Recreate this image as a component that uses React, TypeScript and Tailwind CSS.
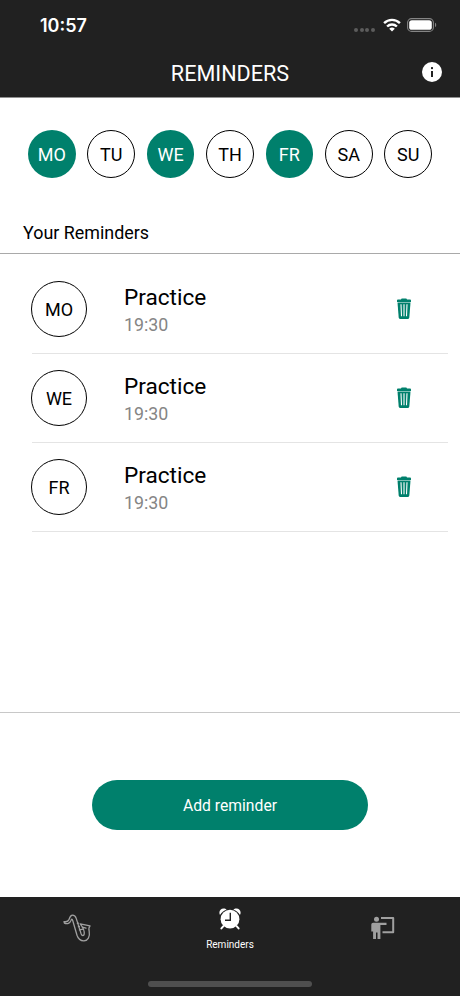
import React from "react";

type Reminder = { day: string; title: string; time: string };

const days = [
  { label: "MO", active: true },
  { label: "TU", active: false },
  { label: "WE", active: true },
  { label: "TH", active: false },
  { label: "FR", active: true },
  { label: "SA", active: false },
  { label: "SU", active: false },
];

const reminders: Reminder[] = [
  { day: "MO", title: "Practice", time: "19:30" },
  { day: "WE", title: "Practice", time: "19:30" },
  { day: "FR", title: "Practice", time: "19:30" },
];

const WifiIcon = () => (
  <svg width="18" height="14" viewBox="0 0 18 14" fill="none" stroke="#fff" strokeWidth="2.4">
    <path d="M1.1 5.1a11.2 11.2 0 0 1 15.8 0" />
    <path d="M4.1 8.5a7 7 0 0 1 9.8 0" />
    <path d="M9 13.6 6.2 10.8a4 4 0 0 1 5.6 0z" fill="#fff" stroke="none" />
  </svg>
);

const BatteryIcon = () => (
  <svg width="30" height="14" viewBox="0 0 30 14">
    <rect x="0.6" y="0.6" width="25.8" height="12.8" rx="4" fill="none" stroke="#858585" strokeWidth="1.1" />
    <rect x="2.2" y="2.2" width="22.6" height="9.6" rx="2.6" fill="#fff" />
    <path d="M28 4.8c1.6.6 1.6 3.8 0 4.4z" fill="#858585" />
  </svg>
);

const InfoIcon = () => (
  <svg width="20" height="20" viewBox="0 0 20 20">
    <circle cx="10" cy="10" r="10" fill="#fff" />
    <rect x="9" y="5.1" width="2" height="2" fill="#212121" />
    <rect x="9" y="9" width="2" height="6" fill="#212121" />
  </svg>
);

const TrashIcon = () => (
  <svg width="16" height="22" viewBox="0 0 16 22">
    <path
      d="M5 1.6C5 .8 5.6.4 6.4.4h3.2c.8 0 1.4.4 1.4 1.2h3.1c.6 0 .9.4.9.9v1.6H1V2.5c0-.5.3-.9.9-.9z"
      fill="#00806c"
    />
    <path d="M1.5 4.6h13l-1.2 15c-.1.9-.6 1.3-1.3 1.3H4c-.7 0-1.2-.4-1.3-1.3z" fill="#00806c" />
    <path d="M5 6.2l.5 12.1M8 6.2v12.1M11 6.2l-.5 12.1" stroke="#fff" strokeWidth="1.1" />
  </svg>
);

const SaxophoneIcon = () => (
  <svg
    width="28"
    height="28"
    viewBox="0 0 28 28"
    fill="none"
    stroke="#a0a0a0"
    strokeWidth="1.3"
    strokeLinejoin="round"
    strokeLinecap="round"
  >
    <path d="M1 7.6c2.8.6 4.2-.2 5.1-2.4C7.1 2.3 7.7 1.2 9.5 1.2c2.1 0 3.1 1.2 3.7 3.2l5 15.6c.7 2 2.7 2 3 .2.4-2.6-1-6.6-4-10.4l9.8 2.1c-1.7 1.5-1.3 3.2-.8 5.6 1 5.3-1.4 9.2-5.2 9.3-3.9.1-5.9-2.2-7-5.6L9.8 6.8c-.7-2-1.3-2-1.8-.4C7 9.3 4.2 10.4 1.4 9.2z" />
    <path d="M14.4 9.4l1-.2M15.4 12.6l1-.2M19.4 13.2l3.6.9M16.4 15.8l3.8-.6" />
  </svg>
);

const AlarmIcon = () => (
  <svg width="22" height="22" viewBox="0 0 22 22">
    <circle cx="11" cy="11.2" r="9.4" fill="#fff" />
    <path
      d="M1 6.9C-.7 4 1.3.6 4.6.6c1.3 0 2.2.4 3 1.1C4.8 2.5 2.4 4.3 1 6.9zM21 6.9C22.7 4 20.7.6 17.4.6c-1.3 0-2.2.4-3 1.1 2.8.8 5.2 2.6 6.6 5.2z"
      fill="#fff"
    />
    <path d="M4.4 18.2l-2 2.2M17.6 18.2l2 2.2" stroke="#fff" strokeWidth="2" strokeLinecap="round" />
    <path d="M11.3 4.8v7.4H6" fill="none" stroke="#212121" strokeWidth="1.4" />
  </svg>
);

const TeacherIcon = () => (
  <svg width="24" height="24" viewBox="0 0 24 24" fill="#a0a0a0">
    <path d="M10 2h12.2v14.2H11.5" fill="none" stroke="#a0a0a0" strokeWidth="2" strokeLinejoin="round" />
    <circle cx="5.5" cy="3.3" r="2.5" />
    <path d="M2.2 6.8h13.3v2.2H9.4v14H6.5v-6.5H5V23H2.1v-7.6H.3V8.7c0-1.1.8-1.9 1.9-1.9z" />
  </svg>
);

const App = () => {
  return (
    <div className="flex h-[996px] w-[460px] flex-col overflow-hidden bg-white font-['Roboto',sans-serif] text-black">
      {/* Header with status bar */}
      <header className="h-[98px] shrink-0 border-b border-[#909090] bg-[#212121] text-white">
        <div className="flex h-[50px] items-center justify-between pr-[23px] pl-10">
          <span className="pt-px font-['Inter',sans-serif] text-[18px] leading-none font-semibold">10:57</span>
          <div className="flex items-center">
            <div className="mt-2.5 mr-2 flex gap-[1.7px]">
              <i className="size-1 rounded-full bg-[#5c5c5c]" />
              <i className="size-1 rounded-full bg-[#5c5c5c]" />
              <i className="size-1 rounded-full bg-[#5c5c5c]" />
              <i className="size-1 rounded-full bg-[#5c5c5c]" />
            </div>
            <WifiIcon />
            <div className="ml-[6px]">
              <BatteryIcon />
            </div>
          </div>
        </div>
        <div className="grid h-[47px] grid-cols-[60px_1fr_60px] items-center">
          <h1 className="col-start-2 text-center text-[21.6px] leading-none">REMINDERS</h1>
          <button className="mb-1 ml-[22px] w-5">
            <InfoIcon />
          </button>
        </div>
      </header>

      {/* Day picker */}
      <div className="mt-8 flex h-12 shrink-0 justify-between px-7">
        {days.map((day) => (
          <button
            key={day.label}
            className={`flex size-[47.5px] items-center justify-center rounded-full pt-px text-[18px] ${
              day.active ? "bg-[#00806c] text-white" : "border-[1.2px] border-black"
            }`}
          >
            {day.label}
          </button>
        ))}
      </div>

      <h2 className="mt-[42px] h-[34px] shrink-0 border-b border-[#a9a9a9] pl-[23px] text-[17.9px] leading-[26px]">
        Your Reminders
      </h2>

      {/* Reminder list */}
      <ul className="h-[459px] shrink-0 border-b border-[#c8c8c8] pt-[11px]">
        {reminders.map((reminder) => (
          <li key={reminder.day} className="mr-3 ml-8 flex h-[89px] items-center border-b border-[#e4e4e4]">
            <div className="-ml-px flex size-14 items-center justify-center rounded-full border border-black text-[18px]">
              {reminder.day}
            </div>
            <div className="ml-[37px] flex-1 pt-0.5">
              <p className="text-[22.6px] leading-[28px]">{reminder.title}</p>
              <p className="text-[17.8px] leading-[25px] text-[#858585]">{reminder.time}</p>
            </div>
            <button className="mr-9">
              <TrashIcon />
            </button>
          </li>
        ))}
      </ul>

      <div className="flex h-[184px] shrink-0 items-center justify-center">
        <button className="h-[50px] w-[276px] rounded-full bg-[#00806c] pt-0.5 text-[15.7px] text-white">
          Add reminder
        </button>
      </div>

      {/* Tab bar */}
      <nav className="flex flex-1 flex-col bg-[#212121]">
        <div className="grid h-[61px] grid-cols-3">
          <button className="flex items-center justify-center">
            <SaxophoneIcon />
          </button>
          <button className="flex flex-col items-center pt-[11px] text-[10px] text-white">
            <AlarmIcon />
            <span className="mt-2 leading-[14px]">Reminders</span>
          </button>
          <button className="flex items-center justify-center">
            <TeacherIcon />
          </button>
        </div>
        <div className="mx-auto mt-[23px] h-[6px] w-[164px] rounded-full bg-[#4f4f4f]" />
      </nav>
    </div>
  );
};

export default App;
